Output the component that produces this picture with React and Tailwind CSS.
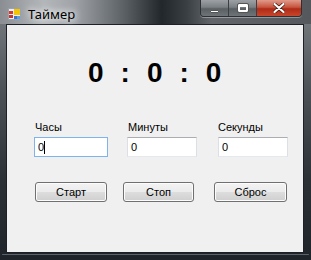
import React from 'react';

const captionBtn = "h-full flex items-center justify-center border-r border-[#3a3f45] last:border-r-0";

const TimerWindow = () => {
  return (
    <div className="w-[311px] h-[260px] flex flex-col bg-[linear-gradient(180deg,#7d8287_0%,#4b5157_35%,#2a3036_70%,#1e2429_100%)] font-['Liberation_Sans',Arial,sans-serif] overflow-hidden">
      {/* Title bar */}
      <div className="h-[24px] flex items-start bg-[linear-gradient(90deg,#8a8e92_0%,#b4b7ba_14%,#9fa3a7_24%,#5b6065_40%,#22272c_52%,#3a3f44_60%,#62666b_68%,#55595e_100%)] relative">
        <div className="pl-[8px] pt-[7px] flex items-center">
          <svg width="13" height="12" viewBox="0 0 13 12">
            <rect x="0.5" y="0.5" width="12" height="11" fill="#e9eef4" stroke="#9aa3ad" />
            <rect x="6" y="1" width="6" height="6" fill="#f5c400" />
            <rect x="1" y="3" width="4" height="3" fill="#d8392a" />
            <rect x="1" y="7" width="4" height="3" fill="#c8342a" />
            <rect x="6" y="8" width="3" height="3" fill="#3a74d0" />
            <rect x="9" y="8" width="3" height="3" fill="#5a9ee8" />
          </svg>
          <span className="ml-[7px] text-[13px] leading-[14px] text-black font-['Noto_Sans',sans-serif] [text-shadow:0_0_6px_#ffffff,0_0_10px_#ffffff]">Таймер</span>
        </div>
        <div className="ml-auto mr-[9px] h-[17px] w-[102px] flex rounded-b-[4px] border border-t-0 border-[#2c3136] overflow-hidden shadow-[0_1px_0_rgba(255,255,255,0.35)]">
          <div className={captionBtn + " w-[28px] bg-[linear-gradient(180deg,#9da1a5_0%,#7a7f84_45%,#5a5f64_55%,#6f7479_100%)]"}>
            <div className="mt-[6px] w-[9px] h-[3px] bg-white border border-[#555] rounded-[1px]" />
          </div>
          <div className={captionBtn + " w-[28px] bg-[linear-gradient(180deg,#9da1a5_0%,#7a7f84_45%,#5a5f64_55%,#6f7479_100%)]"}>
            <div className="w-[10px] h-[8px] border-2 border-t-[3px] border-white outline outline-1 outline-[#555] rounded-[1px]" />
          </div>
          <div className="flex-1 h-full flex items-center justify-center bg-[linear-gradient(180deg,#e09a8a_0%,#c7553f_45%,#b02b16_55%,#c9462c_100%)]">
            <svg width="12" height="10" viewBox="0 0 12 10">
              <path d="M1.5 1 L10.5 9 M10.5 1 L1.5 9" stroke="#4a1a12" strokeWidth="3.6" strokeLinecap="round" />
              <path d="M1.5 1 L10.5 9 M10.5 1 L1.5 9" stroke="#ffffff" strokeWidth="2.2" strokeLinecap="round" />
            </svg>
          </div>
        </div>
      </div>

      {/* Client area */}
      <div className="ml-[6px] mr-[7px] h-[229px] border border-[#1b2126] bg-[#f0f0f0] text-[11px] text-black">
        {/* Time display */}
        <div className="mt-[34px] pl-[81px] flex gap-[17px] text-[28px] leading-[28px] font-bold">
          <span>0</span>
          <span>:</span>
          <span>0</span>
          <span>:</span>
          <span>0</span>
        </div>

        {/* Fields */}
        <div className="mt-[34px] pl-[27px] flex">
          <div className="w-[93px] flex flex-col">
            <span className="pl-[1px] leading-[13px]">Часы</span>
            <div className="mt-[3px] w-[74px] h-[20px] bg-white border border-[#7eb4ea] flex items-center pl-[3px]">
              <span className="leading-[13px]">0</span>
              <span className="w-[1px] h-[13px] bg-black" />
            </div>
          </div>
          <div className="w-[91px] flex flex-col">
            <span className="pl-[1px] leading-[13px]">Минуты</span>
            <div className="mt-[3px] w-[70px] h-[20px] bg-white border border-[#abadb3] border-x-[#dbdfe6] border-b-[#e3e9ef] flex items-center pl-[3px]">
              <span className="leading-[13px]">0</span>
            </div>
          </div>
          <div className="w-[70px] flex flex-col">
            <span className="leading-[13px]">Секунды</span>
            <div className="mt-[3px] w-[70px] h-[20px] bg-white border border-[#abadb3] border-x-[#dbdfe6] border-b-[#e3e9ef] flex items-center pl-[3px]">
              <span className="leading-[13px]">0</span>
            </div>
          </div>
        </div>

        {/* Buttons */}
        <div className="mt-[25px] pl-[28px] flex">
          <button className="w-[72px] h-[20px] rounded-[3px] border border-[#707070] bg-[linear-gradient(180deg,#f3f3f3_0%,#ebebeb_50%,#dddddd_51%,#cfcfcf_100%)] leading-[13px] shadow-[inset_0_0_0_1px_#fcfcfc]">Старт</button>
          <button className="ml-[16px] w-[71px] h-[20px] rounded-[3px] border border-[#707070] bg-[linear-gradient(180deg,#f3f3f3_0%,#ebebeb_50%,#dddddd_51%,#cfcfcf_100%)] leading-[13px] shadow-[inset_0_0_0_1px_#fcfcfc]">Стоп</button>
          <button className="ml-[20px] w-[73px] h-[20px] rounded-[3px] border border-[#707070] bg-[linear-gradient(180deg,#f3f3f3_0%,#ebebeb_50%,#dddddd_51%,#cfcfcf_100%)] leading-[13px] shadow-[inset_0_0_0_1px_#fcfcfc]">Сброс</button>
        </div>
      </div>
      <div className="mx-[2px] mt-[1px] h-[1px] bg-[#5b6268] rounded-full" />
    </div>
  );
};

export default function App() {
  return <TimerWindow />;
}
